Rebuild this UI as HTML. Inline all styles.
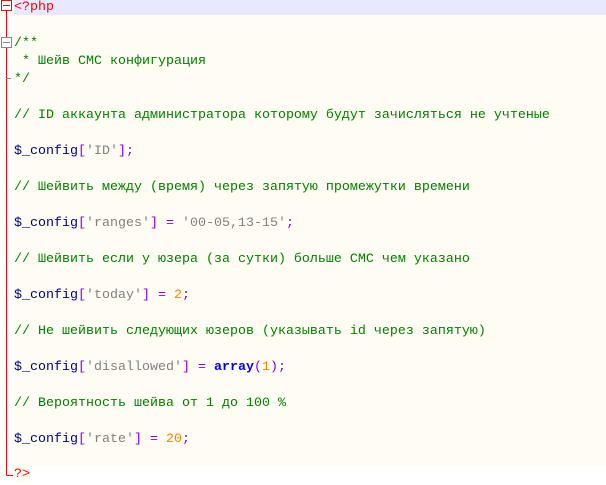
<!DOCTYPE html>
<html><head><meta charset="utf-8"><style>
body{margin:0;width:606px;height:485px;background:#fff;position:relative;overflow:hidden}
#ed{position:absolute;left:14px;top:0;width:592px;height:466px;background:#fffcf3}
#hl{position:absolute;left:14px;top:0;width:592px;height:15px;background:#e8e8ff}
.l{position:absolute;left:14px;height:18px;line-height:18px;font-family:"Liberation Mono","Noto Sans CJK SC",monospace;font-size:13.33px;white-space:pre;color:#000}
.c{color:#008000}.v{color:#000080}.p{color:#8000ff}.s{color:#808080}.n{color:#ff8000}.k{color:#0000ff;font-weight:bold}.r{color:#ff0000}
</style></head><body>
<div id="ed"></div><div id="hl"></div>
<svg style="position:absolute;left:0;top:0" width="14" height="485">
<line x1="6.5" y1="11" x2="6.5" y2="37" stroke="#f00"/>
<line x1="6.5" y1="47" x2="6.5" y2="475.5" stroke="#f00"/>
<line x1="6.5" y1="475.5" x2="13" y2="475.5" stroke="#f00"/>
<line x1="6" y1="78.5" x2="11" y2="78.5" stroke="#888"/>
<rect x="1.5" y="0.5" width="10" height="10" fill="#fff" stroke="#f00"/>
<line x1="3" y1="5.5" x2="10" y2="5.5" stroke="#f00"/>
<rect x="1.5" y="37.5" width="10" height="10" fill="#fff" stroke="#888"/>
<line x1="3" y1="42.5" x2="10" y2="42.5" stroke="#888"/>
</svg>
<div class="l r" style="top:-1px">&lt;?php</div>
<div class="l c" style="top:35px">/**</div>
<div class="l c" style="top:53px"> * Шейв СМС конфигурация</div>
<div class="l c" style="top:71px">*/</div>
<div class="l c" style="top:107px">// ID аккаунта администратора которому будут зачисляться не учтеные</div>
<div class="l" style="top:143px"><span class="v">$_config</span><span class="p">[</span><span class="s">'ID'</span><span class="p">];</span></div>
<div class="l c" style="top:179px">// Шейвить между (время) через запятую промежутки времени</div>
<div class="l" style="top:215px"><span class="v">$_config</span><span class="p">[</span><span class="s">'ranges'</span><span class="p">]</span> <span class="p">=</span> <span class="s">'00-05,13-15'</span><span class="p">;</span></div>
<div class="l c" style="top:251px">// Шейвить если у юзера (за сутки) больше СМС чем указано</div>
<div class="l" style="top:287px"><span class="v">$_config</span><span class="p">[</span><span class="s">'today'</span><span class="p">]</span> <span class="p">=</span> <span class="n">2</span><span class="p">;</span></div>
<div class="l c" style="top:323px">// Не шейвить следующих юзеров (указывать id через запятую)</div>
<div class="l" style="top:359px"><span class="v">$_config</span><span class="p">[</span><span class="s">'disallowed'</span><span class="p">]</span> <span class="p">=</span> <span class="k">array</span><span class="p">(</span><span class="n">1</span><span class="p">);</span></div>
<div class="l c" style="top:395px">// Вероятность шейва от 1 до 100 %</div>
<div class="l" style="top:431px"><span class="v">$_config</span><span class="p">[</span><span class="s">'rate'</span><span class="p">]</span> <span class="p">=</span> <span class="n">20</span><span class="p">;</span></div>
<div class="l r" style="top:465px;background:#fffcf3;height:18px;line-height:20px">?&gt;</div>
</body></html>
